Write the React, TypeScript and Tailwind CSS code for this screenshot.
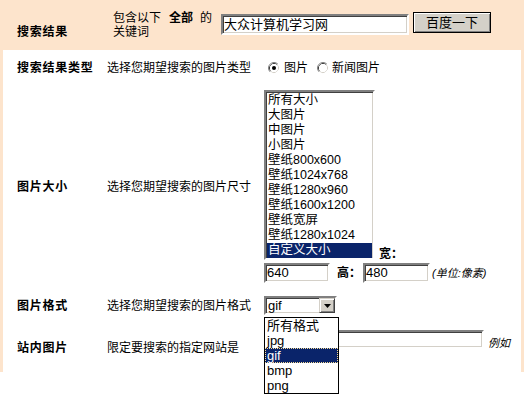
import React from 'react'

const sizeOptions = ['所有大小', '大图片', '中图片', '小图片', '壁纸800x600', '壁纸1024x768', '壁纸1280x960', '壁纸1600x1200', '壁纸宽屏', '壁纸1280x1024', '自定义大小']
const formatOptions = ['所有格式', 'jpg', 'gif', 'bmp', 'png']

// classic sunken field
const sunken = 'border-2 border-t-[#808080] border-l-[#808080] border-b-white border-r-white bg-white shadow-[inset_1px_1px_0_#404040,inset_-1px_-1px_0_#d4d0c8]'

const Radio = ({ checked }: { checked?: boolean }) => (
    <svg width="12" height="12" viewBox="0 0 12 12" className="shrink-0">
        <path d="M2.11 9.89 A5.5 5.5 0 0 1 9.89 2.11" fill="none" stroke="#808080" strokeWidth="1" />
        <path d="M9.89 2.11 A5.5 5.5 0 0 1 2.11 9.89" fill="none" stroke="#ffffff" strokeWidth="1" />
        <path d="M2.82 9.18 A4.5 4.5 0 0 1 9.18 2.82" fill="none" stroke="#404040" strokeWidth="1" />
        <path d="M9.18 2.82 A4.5 4.5 0 0 1 2.82 9.18" fill="none" stroke="#d4d0c8" strokeWidth="1" />
        <circle cx="6" cy="6" r="4" fill="#ffffff" />
        {checked && <circle cx="6" cy="6" r="2" fill="#000000" />}
    </svg>
)

const Label = ({ children, pt }: { children: React.ReactNode, pt: string }) => (
    <div className={`w-[104px] shrink-0 pl-[14px] font-bold tracking-[0.75px] ${pt}`}>{children}</div>
)

const Desc = ({ children, pt }: { children: React.ReactNode, pt: string }) => (
    <div className={`w-[157px] shrink-0 ${pt}`}>{children}</div>
)

const App: React.FC = (): React.ReactElement => {
    return (
        <div className="h-[397px] w-[525px] bg-white font-['Liberation_Sans','Noto_Sans_CJK_SC',sans-serif] text-[12px] leading-[14px] text-black">
            <div className="w-[524px] bg-[#fde4cc]">
                {/* header row */}
                <div className="flex h-[50px] items-start">
                    <div className="w-[113px] shrink-0 pl-[17px] pt-[25px] font-bold tracking-[0.75px]">搜索结果</div>
                    <div className="w-[108px] shrink-0 pt-[11px]">
                        <div className="flex">
                            <span>包含以下</span>
                            <span className="ml-[8px] font-bold">全部</span>
                            <span className="ml-[7px]">的</span>
                        </div>
                        <div>关键词</div>
                    </div>
                    <div className={`mt-[14px] h-[21px] w-[188px] shrink-0 pl-[1px] text-[13px] leading-[17px] ${sunken}`}>大众计算机学习网</div>
                    <button className="ml-[4px] mt-[12px] h-[21px] w-[78px] shrink-0 border border-black bg-[#d4d0c8] text-[13px] leading-[17px] shadow-[inset_1px_1px_0_#ffffff,inset_-1px_-1px_0_#808080]">
                        百度一下
                    </button>
                </div>

                {/* body */}
                <div className="mx-[3px] mb-[3px] bg-white">
                    <div className="flex h-[38px] items-start">
                        <Label pt="pt-[11px]">搜索结果类型</Label>
                        <Desc pt="pt-[11px]">选择您期望搜索的图片类型</Desc>
                        <div className="box-content flex h-[14px] items-center pt-[11px]">
                            <span className="ml-[4px]"><Radio checked /></span>
                            <span className="ml-[4px]">图片</span>
                            <span className="ml-[9px]"><Radio /></span>
                            <span className="ml-[3px]">新闻图片</span>
                        </div>
                    </div>

                    <div className="flex h-[206px] items-start">
                        <Label pt="pt-[92px]">图片大小</Label>
                        <Desc pt="pt-[92px]">选择您期望搜索的图片尺寸</Desc>
                        <div className="flex flex-col pt-[2px]">
                            <div className="flex items-end">
                                <div className={`h-[170px] w-[111px] overflow-hidden pt-[1px] text-[12.5px] leading-[15px] ${sunken}`}>
                                    {sizeOptions.map((opt, i) => (
                                        <div
                                            key={opt}
                                            className={i === sizeOptions.length - 1 ? 'mx-[1px] h-[15px] bg-[#0a246a] pl-[1px] text-white' : 'h-[15px] pl-[2px]'}
                                        >
                                            {opt}
                                        </div>
                                    ))}
                                </div>
                                <span className="mb-[-1px] ml-[4px] font-bold">宽：</span>
                            </div>
                            <div className="mt-[3px] flex items-center">
                                <div className={`h-[20px] w-[66px] pl-[1px] text-[13px] leading-[16px] ${sunken}`}>640</div>
                                <span className="ml-[7px] font-bold">高：</span>
                                <div className={`ml-[2px] h-[20px] w-[67px] pl-[1px] text-[13px] leading-[16px] ${sunken}`}>480</div>
                                <span className="ml-[2px] text-[11px] italic">(单位:像素)</span>
                            </div>
                        </div>
                    </div>

                    <div className="flex h-[34px] items-start">
                        <Label pt="pt-[5px]">图片格式</Label>
                        <Desc pt="pt-[5px]">选择您期望搜索的图片格式</Desc>
                        <div className="relative mt-[2px]">
                            <div className={`flex h-[19px] w-[73px] items-center justify-between ${sunken}`}>
                                <span className="pl-[2px] text-[13px] leading-[15px]">gif</span>
                                <span className="flex h-[15px] w-[16px] items-center justify-center border border-t-[#d4d0c8] border-l-[#d4d0c8] border-b-[#404040] border-r-[#404040] bg-[#d4d0c8] shadow-[inset_1px_1px_0_#ffffff,inset_-1px_-1px_0_#808080]">
                                    <svg width="7" height="4" viewBox="0 0 7 4">
                                        <path d="M0 0 H7 L3.5 4 Z" fill="#000" />
                                    </svg>
                                </span>
                            </div>
                            <div className="absolute left-0 top-[21px] z-10 w-[75px] border border-black bg-white text-[13px] leading-[15px]">
                                {formatOptions.map(opt => (
                                    <div
                                        key={opt}
                                        className={opt === 'gif' ? 'h-[15px] border border-dotted border-[#f5db95] bg-[#0a246a] pl-[1px] leading-[13px] text-white' : 'h-[15px] pl-[2px]'}
                                    >
                                        {opt}
                                    </div>
                                ))}
                            </div>
                        </div>
                    </div>

                    <div className="flex h-[44px] items-start">
                        <Label pt="pt-[13px]">站内图片</Label>
                        <Desc pt="pt-[13px]">限定要搜索的指定网站是</Desc>
                        <div className={`mt-[2px] h-[19px] w-[220px] ${sunken}`}></div>
                        <span className="ml-[4px] pt-[8px] text-[11px] italic">例如</span>
                    </div>
                </div>
            </div>
        </div>
    )
}

export default App
